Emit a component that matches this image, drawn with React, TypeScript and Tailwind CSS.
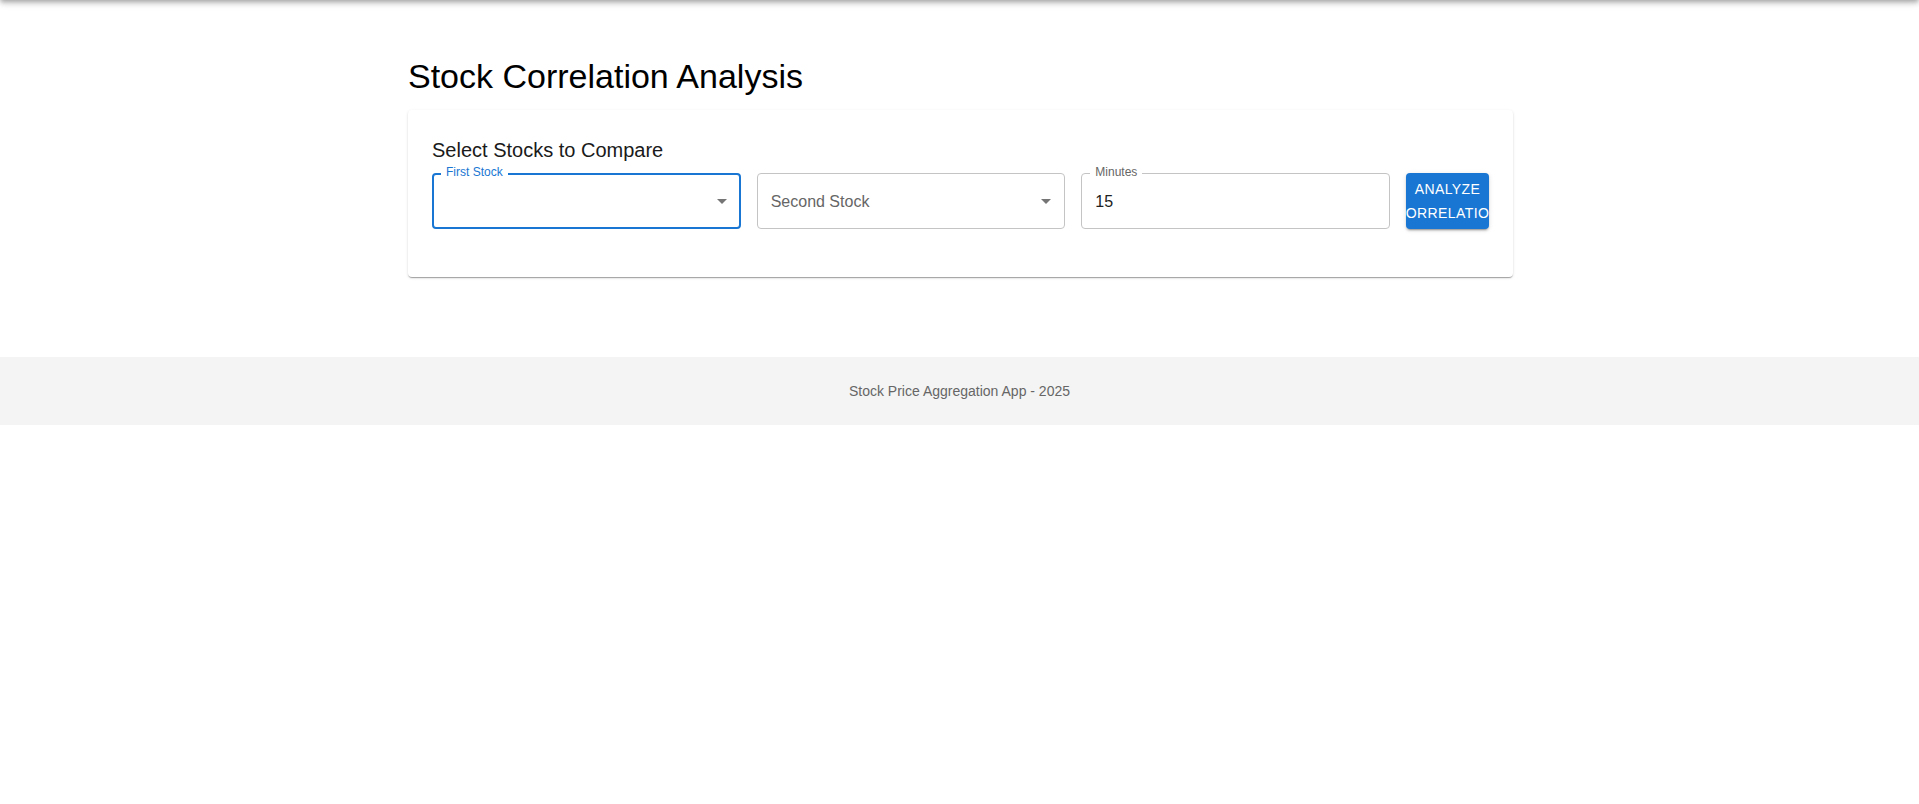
import React from "react";

/**
 * Stock correlation page: title, a card with the stock pickers and a footer.
 */

function ArrowDown() {
  return (
    <svg viewBox="0 0 24 24" className="h-6 w-6 shrink-0 fill-[rgba(0,0,0,0.54)]">
      <path d="M7 10l5 5 5-5z" />
    </svg>
  );
}

function Field({
  label,
  value,
  placeholder,
  focused,
  select,
}: {
  label?: string;
  value?: string;
  placeholder?: string;
  focused?: boolean;
  select?: boolean;
}) {
  return (
    <div className="relative h-14">
      {/* outline, drawn over the input like MUI's fieldset */}
      <div
        className={
          focused
            ? "pointer-events-none absolute inset-0 rounded border-2 border-[#1976d2]"
            : "pointer-events-none absolute inset-0 rounded border border-[#c4c4c4]"
        }
      />
      {label && (
        <span
          className={
            focused
              ? "absolute -top-[9px] left-[9px] bg-white px-[5px] text-xs leading-[17px] text-[#1976d2]"
              : "absolute -top-[9px] left-[9px] bg-white px-[5px] text-xs leading-[17px] text-[#666666]"
          }
        >
          {label}
        </span>
      )}
      <div className="flex h-full items-center pl-[14px] pr-[7px] text-base leading-[23px]">
        {value && <span className="text-[#212121]">{value}</span>}
        {placeholder && <span className="text-[#666666]">{placeholder}</span>}
        {select && (
          <span className="ml-auto">
            <ArrowDown />
          </span>
        )}
      </div>
    </div>
  );
}

export default function App() {
  return (
    <div className="min-h-screen bg-white font-['Liberation_Sans',Arial,sans-serif] text-black">
      {/* app bar sits above the viewport, only its shadow shows */}
      <div className="fixed inset-x-0 -top-16 z-10 h-16 bg-[#1976d2] shadow-[0px_2px_4px_-1px_rgba(0,0,0,0.2),0px_4px_5px_0px_rgba(0,0,0,0.14),0px_1px_10px_0px_rgba(0,0,0,0.12)]" />

      <main className="mx-auto w-[1153px] pl-[25px] pr-[23px] pt-[55px]">
        <h1 className="mb-[13px] text-[34px] font-normal leading-[42px]">
          Stock Correlation Analysis
        </h1>

        <section className="rounded bg-white px-6 pb-12 pt-6 shadow-[0px_2px_1px_-1px_rgba(0,0,0,0.2),0px_1px_1px_0px_rgba(0,0,0,0.14),0px_1px_3px_0px_rgba(0,0,0,0.12)]">
          <h2 className="mb-[7px] text-[20px] font-normal leading-8 text-[#1a1a1a]">
            Select Stocks to Compare
          </h2>

          <div className="grid grid-cols-[1fr_1fr_1fr_83px] gap-4">
            <Field label="First Stock" focused select />
            <Field placeholder="Second Stock" select />
            <Field label="Minutes" value="15" />
            <button
              type="button"
              className="flex h-14 items-center justify-center overflow-hidden rounded bg-[#1976d2] px-4 text-center text-sm uppercase leading-[24.5px] tracking-[0.4px] text-white shadow-[0px_3px_1px_-2px_rgba(0,0,0,0.2),0px_2px_2px_0px_rgba(0,0,0,0.14),0px_1px_5px_0px_rgba(0,0,0,0.12)]"
            >
              <span>Analyze Correlation</span>
            </button>
          </div>
        </section>
      </main>

      <footer className="mt-20 bg-[#f4f4f4] py-6 text-center text-sm leading-5 text-[#666666]">
        Stock Price Aggregation App - 2025
      </footer>
    </div>
  );
}
